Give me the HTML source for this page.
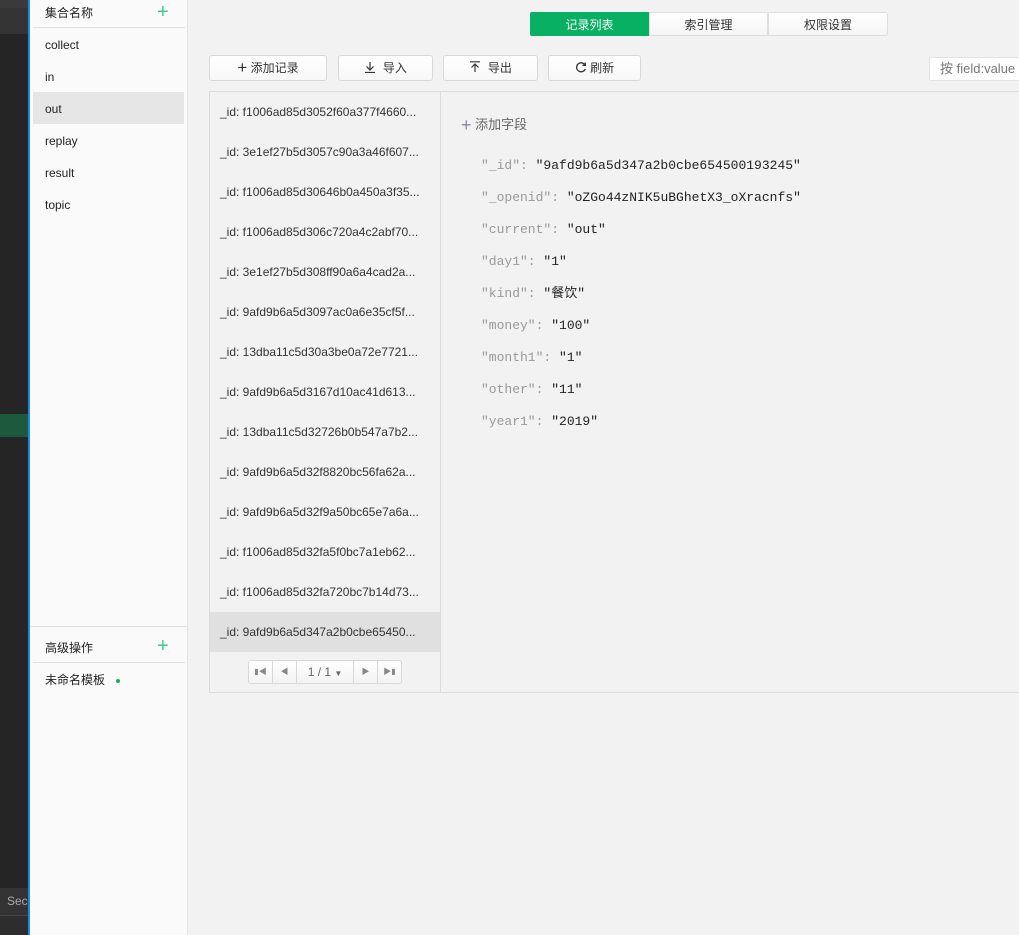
<!DOCTYPE html>
<html><head><meta charset="utf-8"><style>
*{box-sizing:border-box;margin:0;padding:0}
body{width:1019px;height:935px;overflow:hidden;background:#f2f2f2;font-family:"Liberation Sans","Noto Sans CJK SC",sans-serif;font-size:12px;color:#333;position:relative}
.abs{position:absolute}
.dark{left:0;top:0;width:28px;height:935px;background:#252526}
.blue{left:28px;top:0;width:2px;height:935px;background:#1e88e5}
.side{left:30px;top:0;width:158px;height:935px;background:#fafafa;border-right:1px solid #e3e3e3}
.item{position:absolute;left:15px;font-size:12px;color:#222;line-height:16px}
.plus{position:absolute;color:#3cc98a;font-size:20px;font-weight:300;line-height:20px}
.tab{position:absolute;top:12px;height:24px;line-height:24px;text-align:center;font-size:12px;border:1px solid #ddd;background:linear-gradient(#fff,#f5f5f5);color:#333}
.btn{position:absolute;top:55px;height:26px;line-height:24px;text-align:center;border:1px solid #d8d8d8;border-radius:3px;background:linear-gradient(#fff,#f7f7f7);font-size:12px;color:#333}
.row{position:absolute;left:0;width:230px;height:40px;line-height:40px;padding-left:10px;font-size:12px;color:#333;white-space:nowrap}
.f{position:absolute;left:40px;font-family:"Liberation Mono","Noto Sans CJK SC",monospace;font-size:13px;line-height:16px;height:16px;color:#999;white-space:nowrap}
.f b{font-weight:normal;color:#222}
.pg{position:absolute;top:660px;height:24px;border:1px solid #d8d8d8;background:linear-gradient(#fff,#f3f3f3);color:#888;text-align:center;line-height:22px;font-size:8px}
</style></head><body>
<div class="abs dark"></div>
<div class="abs" style="left:0;top:0;width:28px;height:8px;background:#3a3a3a"></div>
<div class="abs" style="left:0;top:8px;width:28px;height:26px;background:#333"></div>
<div class="abs" style="left:0;top:414px;width:28px;height:23px;background:#1d5a3d"></div>
<div class="abs" style="left:0;top:888px;width:28px;height:27px;background:#333;color:#aaa;font-size:12px;line-height:27px;padding-left:7px;overflow:hidden">Sec</div>
<div class="abs" style="left:0;top:915px;width:28px;height:20px;background:#2d2d2d;border-top:1px solid #444"></div>
<div class="abs blue"></div>
<div class="abs side">
 <div class="item" style="top:5px">集合名称</div>
 <div class="plus" style="left:127px;top:2px">+</div>
 <div class="abs" style="left:3px;top:27px;width:152px;height:1px;background:#e0e0e0"></div>
 <div class="abs" style="left:3px;top:92px;width:151px;height:32px;background:#e6e6e6"></div>
 <div class="item" style="top:37px">collect</div>
 <div class="item" style="top:69px">in</div>
 <div class="item" style="top:101px">out</div>
 <div class="item" style="top:133px">replay</div>
 <div class="item" style="top:165px">result</div>
 <div class="item" style="top:197px">topic</div>
 <div class="abs" style="left:0;top:626px;width:158px;height:1px;background:#e0e0e0"></div>
 <div class="item" style="top:640px">高级操作</div>
 <div class="plus" style="left:127px;top:636px">+</div>
 <div class="abs" style="left:3px;top:662px;width:152px;height:1px;background:#e0e0e0"></div>
 <div class="item" style="top:672px">未命名模板</div>
 <div class="abs" style="left:86px;top:679px;width:4px;height:4px;border-radius:50%;background:#1aad5f"></div>
</div>

<div class="tab" style="left:530px;width:119px;background:#07b063;border-color:#07b063;color:#fff;border-radius:2px 0 0 2px">记录列表</div>
<div class="tab" style="left:649px;width:119px">索引管理</div>
<div class="tab" style="left:768px;width:120px;border-radius:0 3px 3px 0">权限设置</div>

<div class="btn" style="left:209px;width:118px"><span style="font-size:17px;vertical-align:-1px;font-weight:300">+</span>&nbsp;添加记录</div>
<div class="btn" style="left:338px;width:95px"><svg width="12" height="12" viewBox="0 0 12 12" style="vertical-align:-1px"><path d="M6 1v8M2.5 5.5L6 9l3.5-3.5M1 11.5h10" stroke="#333" fill="none" stroke-width="1.2"/></svg>&nbsp; 导入</div>
<div class="btn" style="left:443px;width:95px"><svg width="12" height="12" viewBox="0 0 12 12" style="vertical-align:-1px"><path d="M6 11V3M2.5 6.5L6 3l3.5 3.5M1 .8h10" stroke="#333" fill="none" stroke-width="1.2"/></svg>&nbsp; 导出</div>
<div class="btn" style="left:548px;width:93px"><svg width="12" height="12" viewBox="0 0 12 12" style="vertical-align:-1px"><path d="M10 4A4.5 4.5 0 1 0 10.3 8M10.3 1.5V4.3H7.5" stroke="#333" fill="none" stroke-width="1.3"/></svg> 刷新</div>
<div class="abs" style="left:929px;top:57px;width:100px;height:24px;background:#fff;border:1px solid #e3e3e3;border-radius:2px;color:#777;font-size:13px;line-height:22px;padding-left:10px">按 field:value</div>

<div class="abs" style="left:209px;top:91px;width:820px;height:602px;border:1px solid #dcdcdc;background:#f2f2f2"></div>
<div class="abs" style="left:440px;top:92px;width:1px;height:600px;background:#dcdcdc"></div>
<div class="abs" style="left:210px;top:92px;width:230px;height:600px">
 <div class="row" style="top:0">_id: f1006ad85d3052f60a377f4660...</div>
 <div class="row" style="top:40px">_id: 3e1ef27b5d3057c90a3a46f607...</div>
 <div class="row" style="top:80px">_id: f1006ad85d30646b0a450a3f35...</div>
 <div class="row" style="top:120px">_id: f1006ad85d306c720a4c2abf70...</div>
 <div class="row" style="top:160px">_id: 3e1ef27b5d308ff90a6a4cad2a...</div>
 <div class="row" style="top:200px">_id: 9afd9b6a5d3097ac0a6e35cf5f...</div>
 <div class="row" style="top:240px">_id: 13dba11c5d30a3be0a72e7721...</div>
 <div class="row" style="top:280px">_id: 9afd9b6a5d3167d10ac41d613...</div>
 <div class="row" style="top:320px">_id: 13dba11c5d32726b0b547a7b2...</div>
 <div class="row" style="top:360px">_id: 9afd9b6a5d32f8820bc56fa62a...</div>
 <div class="row" style="top:400px">_id: 9afd9b6a5d32f9a50bc65e7a6a...</div>
 <div class="row" style="top:440px">_id: f1006ad85d32fa5f0bc7a1eb62...</div>
 <div class="row" style="top:480px">_id: f1006ad85d32fa720bc7b14d73...</div>
 <div class="row" style="top:520px;background:#e0e0e0">_id: 9afd9b6a5d347a2b0cbe65450...</div>
</div>
<div class="pg" style="left:248px;width:25px;border-radius:3px 0 0 3px">&#9646;&#9664;</div>
<div class="pg" style="left:272px;width:25px">&#9664;</div>
<div class="pg" style="left:296px;width:58px;font-size:12px;color:#666">1 / 1 <span style="font-size:8px">&#9660;</span></div>
<div class="pg" style="left:353px;width:25px">&#9654;</div>
<div class="pg" style="left:377px;width:25px;border-radius:0 3px 3px 0">&#9654;&#9646;</div>

<div class="abs" style="left:441px;top:92px;width:578px;height:600px">
 <div class="abs" style="left:20px;top:22px;color:#666;font-size:13px"><span style="font-size:18px;color:#889;font-weight:300;vertical-align:-2px">+</span> 添加字段</div>
 <div class="f" style="top:66px">"_id": <b>"9afd9b6a5d347a2b0cbe654500193245"</b></div>
 <div class="f" style="top:98px">"_openid": <b>"oZGo44zNIK5uBGhetX3_oXracnfs"</b></div>
 <div class="f" style="top:130px">"current": <b>"out"</b></div>
 <div class="f" style="top:162px">"day1": <b>"1"</b></div>
 <div class="f" style="top:194px">"kind": <b>"餐饮"</b></div>
 <div class="f" style="top:226px">"money": <b>"100"</b></div>
 <div class="f" style="top:258px">"month1": <b>"1"</b></div>
 <div class="f" style="top:290px">"other": <b>"11"</b></div>
 <div class="f" style="top:322px">"year1": <b>"2019"</b></div>
</div>
</body></html>
